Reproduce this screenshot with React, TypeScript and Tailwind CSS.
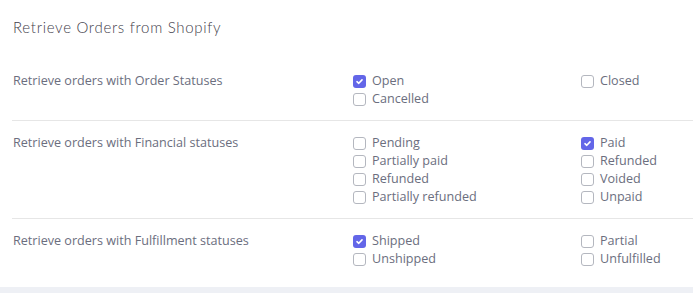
const sections = [
  {
    label: "Retrieve orders with Order Statuses",
    left: [
      { name: "Open", checked: true },
      { name: "Cancelled", checked: false },
    ],
    right: [{ name: "Closed", checked: false }],
  },
  {
    label: "Retrieve orders with Financial statuses",
    left: [
      { name: "Pending", checked: false },
      { name: "Partially paid", checked: false },
      { name: "Refunded", checked: false },
      { name: "Partially refunded", checked: false },
    ],
    right: [
      { name: "Paid", checked: true },
      { name: "Refunded", checked: false },
      { name: "Voided", checked: false },
      { name: "Unpaid", checked: false },
    ],
  },
  {
    label: "Retrieve orders with Fulfillment statuses",
    left: [
      { name: "Shipped", checked: true },
      { name: "Unshipped", checked: false },
    ],
    right: [
      { name: "Partial", checked: false },
      { name: "Unfulfilled", checked: false },
    ],
  },
];

function Check({ name, checked }: { name: string; checked: boolean }) {
  return (
    <label className="flex items-center gap-[6px] h-[18px] text-[12.6px] text-[#6b6e7e]">
      {checked ? (
        <span className="w-[13px] h-[13px] rounded-[3px] bg-[#6366e8] flex items-center justify-center">
          <svg width="9" height="9" viewBox="0 0 10 10">
            <path d="M2.2 5.2 L4.2 7 L7.8 3.2" stroke="#fff" strokeWidth="1.8" fill="none" strokeLinecap="round" strokeLinejoin="round" />
          </svg>
        </span>
      ) : (
        <span className="w-[13px] h-[13px] rounded-[3px] border border-[#b4b7bf] bg-white" />
      )}
      <span className="leading-[18px]">{name}</span>
    </label>
  );
}

export default function App() {
  return (
    <div className="w-[693px] h-[293px] bg-[#eef0f5] font-['Open_Sans',sans-serif]">
      <div className="bg-white h-[287px]">
        <div className="h-[59px] pl-[13px] pt-[16px]">
          <h2 className="text-[15px] font-light tracking-[0.7px] text-[#3f404b] font-['Lato',sans-serif]">
            Retrieve Orders from Shopify
          </h2>
        </div>
        {sections.map((s, i) => (
          <div
            key={s.label}
            className={`ml-[12px] flex pt-[13px] pb-[12px] ${i > 0 ? "border-t border-[#e6e6e6]" : ""}`}
          >
            <div className="w-[341px] pl-[1px] h-[18px] flex items-center text-[12.6px] text-[#6b6e7e]">
              {s.label}
            </div>
            <div className="w-[228px] flex flex-col">
              {s.left.map((o) => (
                <Check key={o.name} {...o} />
              ))}
            </div>
            <div className="flex flex-col">
              {s.right.map((o) => (
                <Check key={o.name} {...o} />
              ))}
            </div>
          </div>
        ))}
      </div>
    </div>
  );
}
